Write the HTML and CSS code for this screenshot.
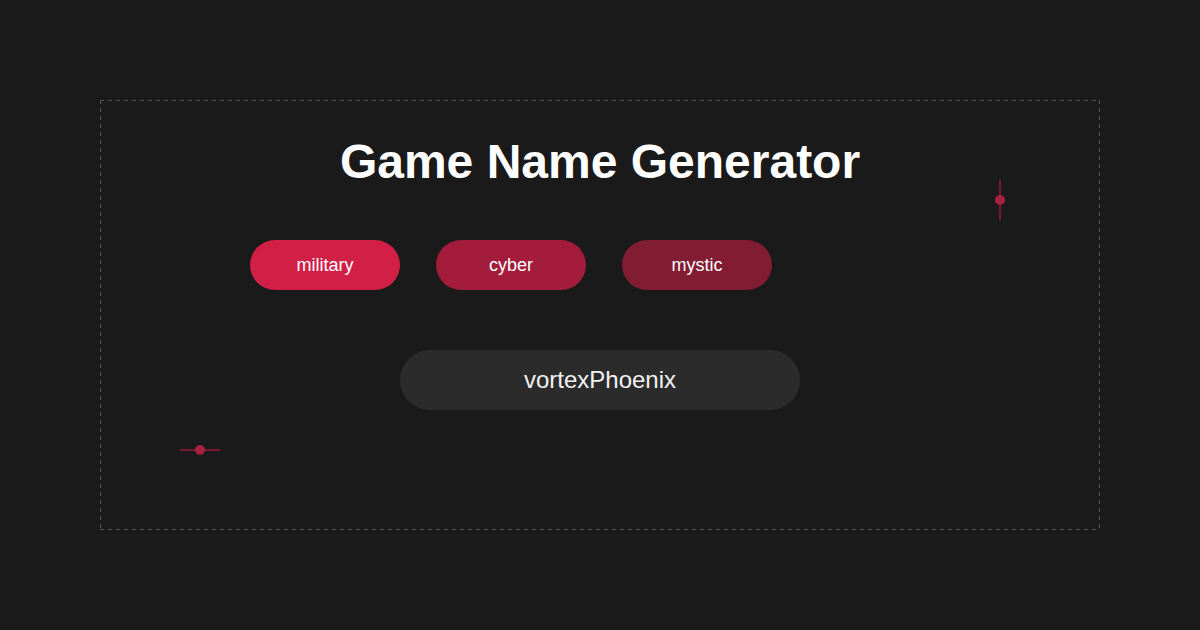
FILE: index.html
```html
<!DOCTYPE html>
<html lang="en">
<head>
<meta charset="utf-8">
<title>Game Name Generator</title>
<link rel="stylesheet" href="styles.css">
</head>
<body>
  <main class="frame">
    <h1 class="title">Game Name Generator</h1>
    <div class="styles">
      <button class="pill pill-military">military</button>
      <button class="pill pill-cyber">cyber</button>
      <button class="pill pill-mystic">mystic</button>
    </div>
    <div class="result">vortexPhoenix</div>
    <span class="marker marker-v"><span class="dot"></span></span>
    <span class="marker marker-h"><span class="dot"></span></span>
  </main>
</body>
</html>
```
FILE: styles.css
```css
html, body {
  margin: 0;
  padding: 0;
  background: #1a1a1a;
}
body {
  width: 1200px;
  height: 630px;
  padding: 100px;
  box-sizing: border-box;
  font-family: "Liberation Sans", Arial, sans-serif;
  color: #ffffff;
}
.frame {
  position: relative;
  height: 430px;
  box-sizing: border-box;
  padding-top: 34px;
  background:
    repeating-linear-gradient(90deg, #555555 0 4px, transparent 4px 8px) top left / 100% 1px no-repeat,
    repeating-linear-gradient(90deg, #555555 0 4px, transparent 4px 8px) bottom left / 100% 1px no-repeat,
    repeating-linear-gradient(180deg, #555555 0 4px, transparent 4px 8px) top left / 1px 100% no-repeat,
    repeating-linear-gradient(180deg, #555555 0 4px, transparent 4px 8px) top right / 1px 100% no-repeat;
}
.title {
  margin: 0;
  font-size: 48px;
  font-weight: bold;
  line-height: 56px;
  text-align: center;
  color: #ffffff;
}
.styles {
  display: flex;
  gap: 36px;
  padding-left: 150px;
  margin-top: 50px;
}
.pill {
  width: 150px;
  height: 50px;
  border: none;
  border-radius: 25px;
  font-family: "Liberation Sans", Arial, sans-serif;
  font-size: 18px;
  color: #ffffff;
  padding: 0;
}
.pill-military { background: #d11f46; }
.pill-cyber { background: #a41c3c; }
.pill-mystic { background: #821c33; }
.result {
  width: 400px;
  height: 60px;
  margin: 60px auto 0;
  border-radius: 30px;
  background: #2b2b2b;
  display: flex;
  align-items: center;
  justify-content: center;
  font-size: 24px;
  color: #f2f2f2;
}
.marker {
  position: absolute;
  background: #7a1a30;
}
.marker-v {
  left: 899px;
  top: 80px;
  width: 2px;
  height: 40px;
}
.marker-h {
  left: 80px;
  top: 349px;
  width: 40px;
  height: 2px;
}
.dot {
  position: absolute;
  width: 10px;
  height: 10px;
  border-radius: 50%;
  background: #a8203f;
  left: 50%;
  top: 50%;
  transform: translate(-50%, -50%);
}
```
